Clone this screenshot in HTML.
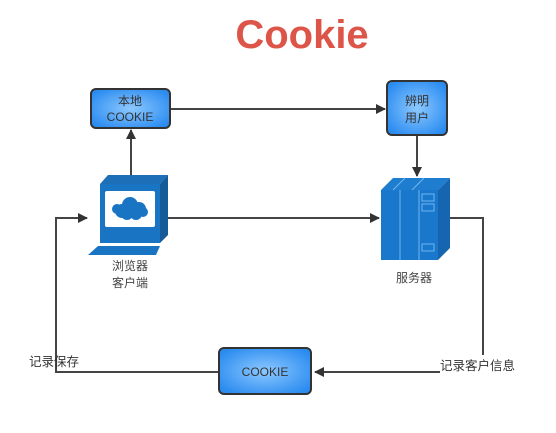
<!DOCTYPE html>
<html><head><meta charset="utf-8"><style>
html,body{margin:0;padding:0;background:#fff;}
svg{display:block;}
text{font-family:"Liberation Sans","Noto Sans CJK SC",sans-serif;}
</style></head><body>
<svg width="556" height="433" viewBox="0 0 556 433" xmlns="http://www.w3.org/2000/svg">
<defs>
<radialGradient id="g" cx="50%" cy="50%" r="60%">
<stop offset="0" stop-color="#8cc8ff"/><stop offset="1" stop-color="#2b8cf0"/>
</radialGradient>
<marker id="a" markerWidth="10" markerHeight="10" refX="9" refY="5" orient="auto" markerUnits="userSpaceOnUse">
<path d="M0,0 L10,5 L0,10 Z" fill="#333"/>
</marker>
</defs>
<text x="302" y="48" text-anchor="middle" font-size="40" font-weight="bold" fill="#dd5548">Cookie</text>

<g stroke="#444" stroke-width="2" fill="none">
<line x1="170" y1="109" x2="385" y2="109" marker-end="url(#a)"/>
<line x1="131" y1="176" x2="131" y2="130" marker-end="url(#a)"/>
<line x1="417" y1="136" x2="417" y2="176" marker-end="url(#a)"/>
<line x1="168" y1="218" x2="379" y2="218" marker-end="url(#a)"/>
<polyline points="450,218 483,218 483,355"/>
<polyline points="440,372 315,372" marker-end="url(#a)"/>
<polyline points="219,372 56,372 56,218 87,218" marker-end="url(#a)"/>
</g>

<rect x="91" y="89" width="79" height="39" rx="5" fill="url(#g)" stroke="#333" stroke-width="2"/>
<text x="130" y="105" text-anchor="middle" font-size="12" fill="#333">本地</text>
<text x="130" y="121" text-anchor="middle" font-size="12" fill="#333">COOKIE</text>

<rect x="387" y="81" width="60" height="54" rx="5" fill="url(#g)" stroke="#333" stroke-width="2"/>
<text x="417" y="105" text-anchor="middle" font-size="12" fill="#333">辨明</text>
<text x="417" y="122" text-anchor="middle" font-size="12" fill="#333">用户</text>

<rect x="219" y="348" width="92" height="46" rx="5" fill="url(#g)" stroke="#333" stroke-width="2"/>
<text x="265" y="376" text-anchor="middle" font-size="12" fill="#333">COOKIE</text>

<g>
<path d="M100,184 L108,175 L168,175 L160,184 Z" fill="#1d6fb8"/>
<path d="M160,184 L168,175 L168,235 L160,243 Z" fill="#155a99"/>
<rect x="100" y="184" width="60" height="59" fill="#1a74c4"/>
<rect x="105" y="191" width="50" height="36" rx="2" fill="#fff"/>
<g fill="#1a74c4">
<circle cx="122" cy="211" r="7"/><circle cx="130" cy="205" r="8"/><circle cx="139" cy="209" r="7"/>
<circle cx="127" cy="214" r="6"/><circle cx="136" cy="214" r="6"/><circle cx="117" cy="209" r="5"/><circle cx="143" cy="212" r="5"/>
</g>
<path d="M98,246 L160,246 L156,255 L88,255 Z" fill="#1a74c4"/>
</g>
<text x="130" y="270" text-anchor="middle" font-size="12" fill="#444">浏览器</text>
<text x="130" y="287" text-anchor="middle" font-size="12" fill="#444">客户端</text>

<g>
<path d="M381,190 L393,178 L450,178 L438,190 Z" fill="#1f7dd0"/>
<path d="M438,190 L450,178 L450,248 L438,260 Z" fill="#1565b0"/>
<rect x="381" y="190" width="57" height="70" fill="#1a78cc"/>
<g stroke="#6fb6f0" stroke-width="1" fill="none">
<line x1="400" y1="190" x2="400" y2="260"/>
<line x1="419" y1="190" x2="419" y2="260"/>
<line x1="405" y1="178" x2="393" y2="190"/>
<line x1="424" y1="178" x2="412" y2="190"/>
<rect x="422" y="194" width="12" height="7"/>
<rect x="422" y="204" width="12" height="7"/>
<rect x="422" y="244" width="12" height="7"/>
</g>
</g>
<text x="414" y="282" text-anchor="middle" font-size="12" fill="#444">服务器</text>

<text x="29" y="366" font-size="12.5" fill="#333">记录保存</text>
<text x="440" y="370" font-size="12.5" fill="#333">记录客户信息</text>
</svg>
</body></html>
